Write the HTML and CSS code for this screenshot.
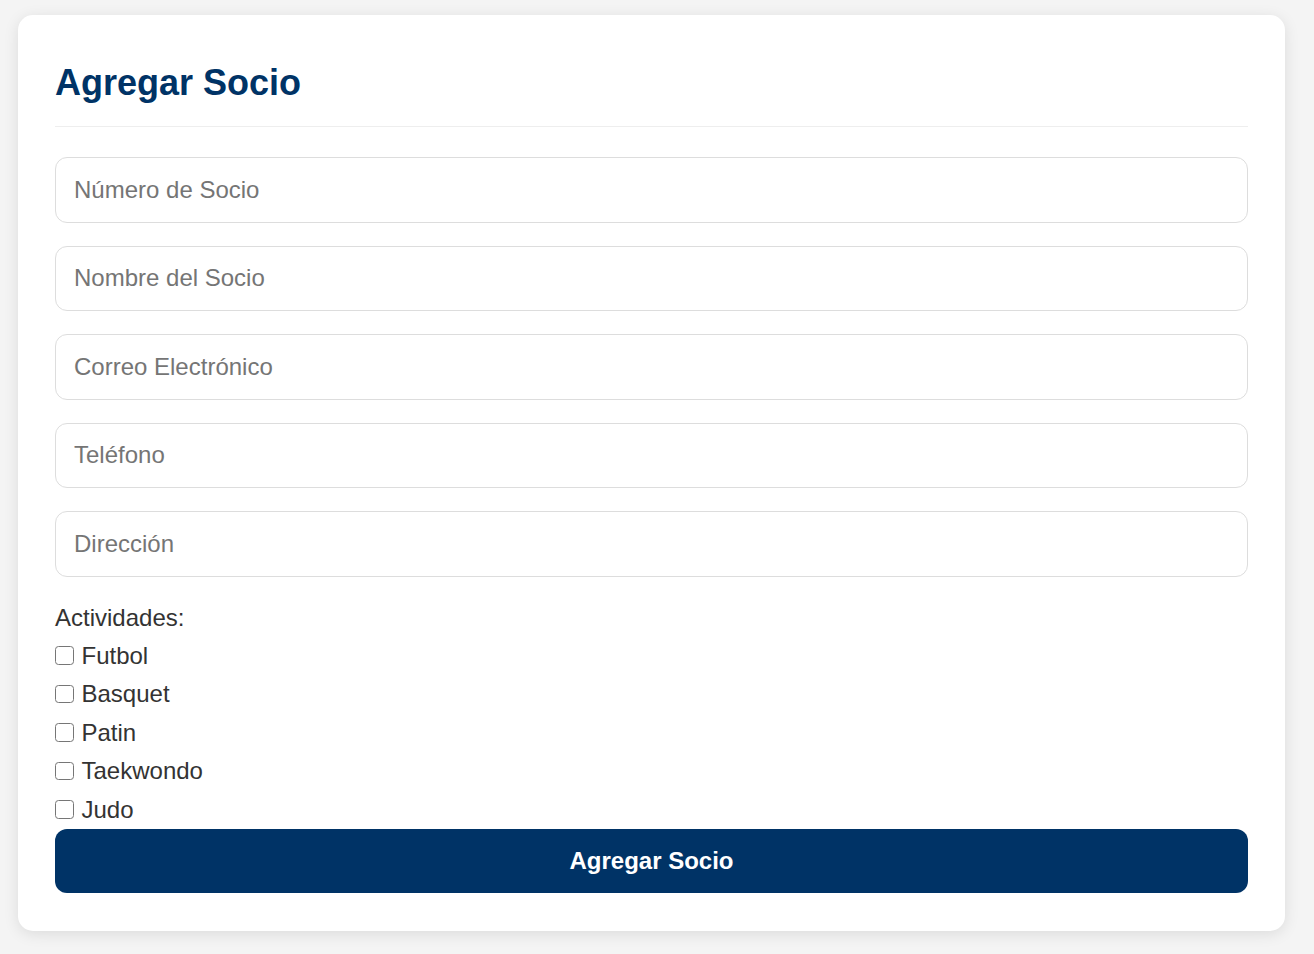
FILE: index.html
```html
<!DOCTYPE html>
<html lang="es">
<head>
<meta charset="utf-8">
<title>Agregar Socio</title>
<link rel="stylesheet" href="styles.css">
</head>
<body>
<main class="card">
  <h2 class="title">Agregar Socio</h2>
  <form class="form">
    <input class="field" type="text" placeholder="Número de Socio">
    <input class="field" type="text" placeholder="Nombre del Socio">
    <input class="field" type="email" placeholder="Correo Electrónico">
    <input class="field" type="tel" placeholder="Teléfono">
    <input class="field" type="text" placeholder="Dirección">
    <div class="activities">
      <div class="activities-label">Actividades:</div>
      <label class="check"><input type="checkbox" class="box">Futbol</label>
      <label class="check"><input type="checkbox" class="box">Basquet</label>
      <label class="check"><input type="checkbox" class="box">Patin</label>
      <label class="check"><input type="checkbox" class="box">Taekwondo</label>
      <label class="check"><input type="checkbox" class="box">Judo</label>
    </div>
    <button type="button" class="submit">Agregar Socio</button>
  </form>
</main>
</body>
</html>
```

FILE: styles.css
```css
html, body {
  margin: 0;
  padding: 0;
}
body {
  background: #f4f4f4;
  font-family: "Liberation Sans", Arial, sans-serif;
  color: #333;
  padding: 15px 29px 23px 18px;
}
.card {
  background: #fff;
  border-radius: 15px;
  box-shadow: 0 3px 15px rgba(0, 0, 0, 0.1);
  padding: 37.5px 37px 38px;
}
.title {
  margin: 9px 0 30px;
  padding-bottom: 22.5px;
  border-bottom: 1.5px solid #eee;
  font-size: 36px;
  font-weight: bold;
  color: #003366;
  line-height: normal;
}
.form {
  display: flex;
  flex-direction: column;
}
.field {
  box-sizing: border-box;
  height: 65.5px;
  margin: 0 0 23px;
  padding: 0 18px;
  border: 1.5px solid #ddd;
  border-radius: 12px;
  font-family: "Liberation Sans", Arial, sans-serif;
  font-size: 24px;
  color: #333;
  outline: none;
}
.field::placeholder {
  color: #757575;
}
.activities {
  display: flex;
  flex-direction: column;
}
.activities-label,
.check {
  font-size: 24px;
  line-height: 38.4px;
  color: #333;
}
.activities-label {
  margin-top: -1px;
}
.check {
  display: block;
}
.box {
  appearance: none;
  -webkit-appearance: none;
  box-sizing: border-box;
  width: 19px;
  height: 18.5px;
  margin: 0 7.5px 0 0;
  border: 1.5px solid #767676;
  border-radius: 3.5px;
  background: #fff;
  vertical-align: -1px;
}
.submit {
  height: 64px;
  margin-top: 0;
  border: none;
  border-radius: 12px;
  background: #003366;
  color: #fff;
  font-family: "Liberation Sans", Arial, sans-serif;
  font-size: 24px;
  font-weight: bold;
  cursor: pointer;
}
```
